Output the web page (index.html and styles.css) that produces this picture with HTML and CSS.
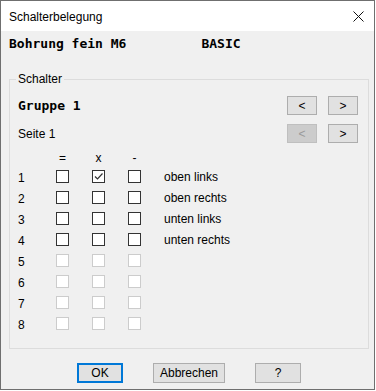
FILE: index.html
```html
<!DOCTYPE html>
<html lang="de">
<head>
  <meta charset="UTF-8">
  <meta name="viewport" content="width=device-width, initial-scale=1">
  <title>Schalterbelegung</title>
  <link rel="stylesheet" href="styles.css">
</head>
<body>
  <div class="dialog">
    <div class="titlebar">
      <span class="title">Schalterbelegung</span>
      <svg class="close" width="11" height="11" viewBox="0 0 11 11">
        <path d="M0.5 0.5 L10.5 10.5 M10.5 0.5 L0.5 10.5" stroke="#111" stroke-width="1" fill="none"/>
      </svg>
    </div>
    <div class="content">
      <div class="prog">
        <span>Bohrung fein M6</span>
        <span class="mode">BASIC</span>
      </div>

      <fieldset class="group">
        <legend>Schalter</legend>
        <div class="nav-row">
          <span class="group-name">Gruppe 1</span>
          <div class="nav">
            <button class="btn-small">&lt;</button>
            <button class="btn-small">&gt;</button>
          </div>
        </div>
        <div class="nav-row second">
          <span>Seite 1</span>
          <div class="nav">
            <button class="btn-small" disabled>&lt;</button>
            <button class="btn-small">&gt;</button>
          </div>
        </div>

        <div class="grid">
          <span></span><span class="head">=</span><span class="head">x</span><span class="head">-</span><span></span>

          <span class="num">1</span>
          <span class="cell"><span class="cb"></span></span>
          <span class="cell"><span class="cb checked"><svg width="11" height="11" viewBox="0 0 11 11"><polyline points="2,5.5 4.5,8 9.5,2.5" fill="none" stroke="#333" stroke-width="1.2"/></svg></span></span>
          <span class="cell"><span class="cb"></span></span>
          <span class="label">oben links</span>

          <span class="num">2</span>
          <span class="cell"><span class="cb"></span></span>
          <span class="cell"><span class="cb"></span></span>
          <span class="cell"><span class="cb"></span></span>
          <span class="label">oben rechts</span>

          <span class="num">3</span>
          <span class="cell"><span class="cb"></span></span>
          <span class="cell"><span class="cb"></span></span>
          <span class="cell"><span class="cb"></span></span>
          <span class="label">unten links</span>

          <span class="num">4</span>
          <span class="cell"><span class="cb"></span></span>
          <span class="cell"><span class="cb"></span></span>
          <span class="cell"><span class="cb"></span></span>
          <span class="label">unten rechts</span>

          <span class="num">5</span>
          <span class="cell"><span class="cb off"></span></span>
          <span class="cell"><span class="cb off"></span></span>
          <span class="cell"><span class="cb off"></span></span>
          <span></span>

          <span class="num">6</span>
          <span class="cell"><span class="cb off"></span></span>
          <span class="cell"><span class="cb off"></span></span>
          <span class="cell"><span class="cb off"></span></span>
          <span></span>

          <span class="num">7</span>
          <span class="cell"><span class="cb off"></span></span>
          <span class="cell"><span class="cb off"></span></span>
          <span class="cell"><span class="cb off"></span></span>
          <span></span>

          <span class="num">8</span>
          <span class="cell"><span class="cb off"></span></span>
          <span class="cell"><span class="cb off"></span></span>
          <span class="cell"><span class="cb off"></span></span>
          <span></span>
        </div>
      </fieldset>

      <div class="actions">
        <button class="btn default">OK</button>
        <button class="btn wide">Abbrechen</button>
        <button class="btn">?</button>
      </div>
    </div>
  </div>
</body>
</html>
```

FILE: styles.css
```css
:root {
  --face: #f0f0f0;
  --btn-bg: #e1e1e1;
  --btn-border: #adadad;
  --text: #000000;
  --accent: #0078d7;
}
* {
  box-sizing: border-box;
  margin: 0;
  padding: 0;
}
body {
  background: #ffffff;
  font-family: 'Liberation Sans', Arial, sans-serif;
  font-size: 12px;
  color: var(--text);
}
.dialog {
  width: 375px;
  height: 390px;
  border: 1px solid #6f6f6f;
  background: var(--face);
}
.titlebar {
  height: 30px;
  background: #ffffff;
  display: flex;
  align-items: center;
  justify-content: space-between;
  padding: 1px 10px 0 8px;
}
.close {
  display: block;
}
.prog {
  display: flex;
  padding: 5px 8px 0;
  height: 20px;
  line-height: 15px;
  font-family: 'DejaVu Sans Mono', 'Liberation Mono', monospace;
  font-weight: 700;
  font-size: 13px;
}
.mode {
  margin-left: 75px;
}
.group {
  width: 360px;
  margin: 21px 0 0 8px;
  border: 1px solid #dcdcdc;
  padding: 10px 10px 14px 8px;
}
.group legend {
  margin-left: -2px;
  padding: 0 2px;
  line-height: 14px;
}
.nav-row {
  display: flex;
  justify-content: space-between;
  align-items: center;
  height: 19px;
}
.nav-row.second {
  margin-top: 9px;
}
.group-name {
  font-family: 'DejaVu Sans Mono', 'Liberation Mono', monospace;
  font-weight: 700;
  font-size: 13px;
}
.nav {
  display: flex;
  gap: 11px;
}
.btn-small,
.btn {
  font-family: inherit;
  font-size: 12px;
  color: var(--text);
  background: var(--btn-bg);
  border: 1px solid var(--btn-border);
}
.btn-small {
  width: 30px;
  height: 19px;
}
.btn-small:disabled {
  background: #cccccc;
  border-color: #bfbfbf;
  color: #9a9a9a;
}
.grid {
  display: grid;
  grid-template-columns: 38px 36px 36px 36px 1fr;
  grid-auto-rows: 21px;
  margin-top: 2px;
  align-items: center;
}
.head {
  width: 13px;
  text-align: center;
  padding-top: 4px;
}
.num {
  padding-top: 3px;
}
.label {
  padding-top: 1px;
}
.cell {
  display: flex;
  align-items: center;
  height: 21px;
}
.cb {
  width: 13px;
  height: 13px;
  border: 1px solid #333333;
  background: #ffffff;
  display: flex;
  align-items: center;
  justify-content: center;
}
.cb.off {
  border-color: #cccccc;
}
.actions {
  display: flex;
  justify-content: center;
  gap: 30px;
  margin-top: 14px;
  padding-left: 3px;
}
.btn {
  width: 46px;
  height: 20px;
}
.btn.wide {
  width: 72px;
}
.btn.default {
  border: 2px solid var(--accent);
}
```
